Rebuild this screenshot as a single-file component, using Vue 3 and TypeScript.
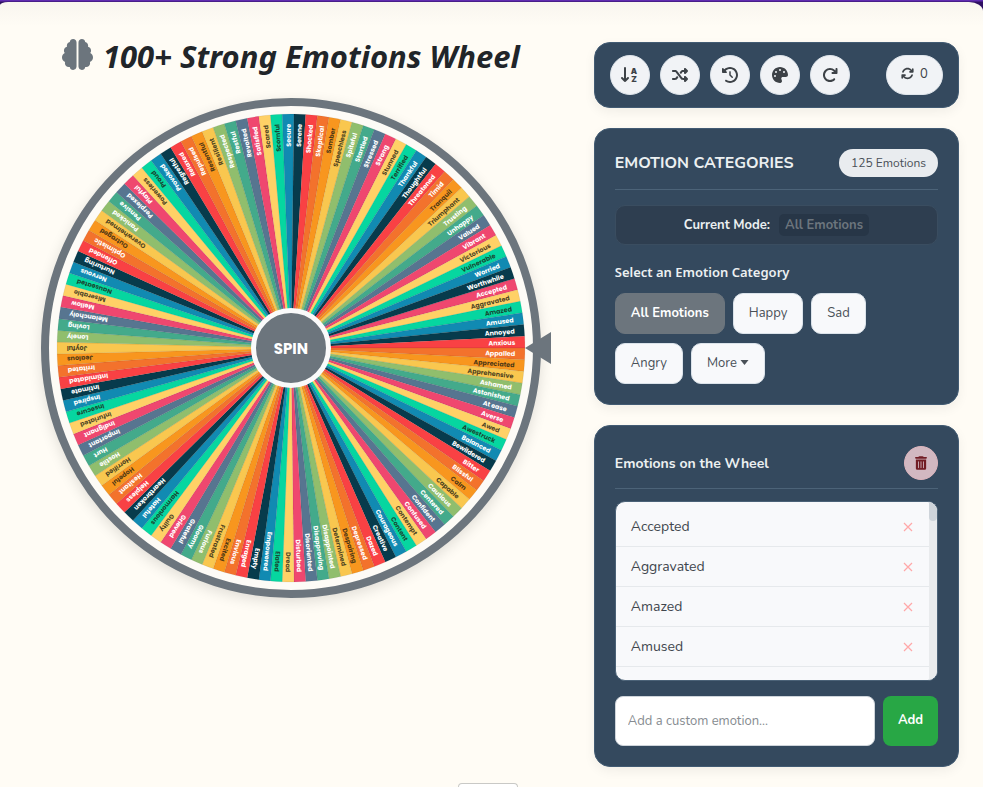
<script setup lang="ts">
import { computed, ref } from 'vue'

interface Slice {
  name: string
  path: string
  fill: string
  ink: string
  turn: string
}

const PALETTE = [
  '#ef476f', '#ffd166', '#06d6a0', '#118ab2', '#073b4c', '#f94144',
  '#f3722c', '#f8961e', '#f9c74f', '#90be6d', '#43aa8b', '#577590',
]
const DARK_INK = new Set(['#ffd166', '#06d6a0', '#f8961e', '#f9c74f'])
const RADIUS = 290

const emotions = ref<string[]>(
  `Accepted,Aggravated,Amazed,Amused,Annoyed,Anxious,Appalled,Appreciated,Apprehensive,Ashamed,Astonished,At ease,
Averse,Awed,Awestruck,Balanced,Bewildered,Bitter,Blissful,Calm,Capable,Cautious,Centered,Confident,
Confused,Contempt,Content,Courageous,Creative,Dazed,Depressed,Despairing,Determined,Disappointed,Disapproving,Disoriented,
Disturbed,Dread,Elated,Empowered,Empty,Enraged,Envious,Excited,Frustrated,Furious,Gloomy,Grateful,
Grieved,Guilty,Harmonious,Hateful,Heartbroken,Helpless,Hesitant,Hopeful,Horrified,Hostile,Hurt,Important,
Indignant,Infuriated,Insecure,Inspired,Intimate,Intimidated,Irritated,Jealous,Joyful,Lonely,Loving,Melancholy,
Mellow,Miserable,Nauseated,Nervous,Nurturing,Offended,Optimistic,Outraged,Overwhelmed,Panicked,Pensive,Perplexed,
Playful,Powerless,Proud,Provoked,Regretful,Relaxed,Repulsed,Resentful,Resilient,Respected,Restful,Revolted,
Satisfied,Scared,Scornful,Secure,Serene,Shocked,Skeptical,Somber,Speechless,Spiteful,Startled,Stressed,
Strong,Stunned,Terrified,Thankful,Thoughtful,Threatened,Timid,Tranquil,Triumphant,Trusting,Unhappy,Valued,
Vibrant,Victorious,Vulnerable,Worried,Worthwhile`.split(',').map((name) => name.trim()),
)

const START_SLICES = 6
const rotation = ref(0)
const spins = ref(0)
const draft = ref('')
const mode = ref('All Emotions')
const categories = ['All Emotions', 'Happy', 'Sad', 'Angry']

function point(deg: number): string {
  const rad = (deg * Math.PI) / 180
  return `${(RADIUS * Math.cos(rad)).toFixed(2)} ${(RADIUS * Math.sin(rad)).toFixed(2)}`
}

const slices = computed<Slice[]>(() => {
  const step = 360 / emotions.value.length
  return emotions.value.map((name, i) => {
    const from = (i - START_SLICES) * step
    const fill = PALETTE[i % PALETTE.length]
    return {
      name,
      fill,
      path: `M0 0L${point(from)}A${RADIUS} ${RADIUS} 0 0 1 ${point(from + step)}Z`,
      ink: DARK_INK.has(fill) ? 'rgba(30, 30, 20, 0.8)' : '#fff',
      turn: `rotate(${(from + step / 2).toFixed(2)})`,
    }
  })
})

// Only the rows inside the scroll window are rendered; padding stands in for the rest.
const ROW = 40
const VIEW = 178
const LEAD = 5
const TEXT_TOP = 14
const scrollTop = ref(0)
const first = computed(() => Math.max(0, Math.floor((scrollTop.value - LEAD) / ROW)))
const last = computed(() =>
  Math.min(emotions.value.length, Math.floor((scrollTop.value + VIEW - LEAD - TEXT_TOP) / ROW) + 1),
)
const rows = computed(() =>
  emotions.value.slice(first.value, last.value).map((name, i) => ({ name, index: first.value + i })),
)
const listPadding = computed(() => ({
  paddingTop: `${LEAD + first.value * ROW}px`,
  paddingBottom: `${(emotions.value.length - last.value) * ROW}px`,
}))
const thumb = computed(() => {
  const content = LEAD + emotions.value.length * ROW
  const size = Math.max(19, (VIEW * VIEW) / content)
  const travel = Math.max(1, content - VIEW)
  return {
    height: `${size}px`,
    marginTop: `${Math.min(1, scrollTop.value / travel) * (VIEW - size)}px`,
  }
})

function onScroll(event: Event): void {
  scrollTop.value = (event.target as HTMLElement).scrollTop
}

const tools = [
  {
    label: 'Shuffle',
    box: '0 0 512 512',
    path: 'M403.8 34.4c12-5 25.7-2.2 34.9 6.9l64 64c6 6 9.4 14.1 9.4 22.6s-3.4 16.6-9.4 22.6l-64 64c-9.2 9.2-22.9 11.9-34.9 6.9s-19.8-16.6-19.8-29.6V160H352c-10.1 0-19.6 4.7-25.6 12.8L284 229.3 244 176l31.2-41.6C293.3 110.2 321.8 96 352 96h32V64c0-12.9 7.8-24.6 19.8-29.6zM164 282.7L204 336l-31.2 41.6C154.7 401.8 126.2 416 96 416H32c-17.7 0-32-14.3-32-32s14.3-32 32-32H96c10.1 0 19.6-4.7 25.6-12.8L164 282.7zm274.6 188c-9.2 9.2-22.9 11.9-34.9 6.9s-19.8-16.6-19.8-29.6V416H352c-30.2 0-58.7-14.2-76.8-38.4L121.6 172.8c-6-8.1-15.5-12.8-25.6-12.8H32c-17.7 0-32-14.3-32-32s14.3-32 32-32H96c30.2 0 58.7 14.2 76.8 38.4L326.4 339.2c6 8.1 15.5 12.8 25.6 12.8h32V320c0-12.9 7.8-24.6 19.8-29.6s25.7-2.2 34.9 6.9l64 64c6 6 9.4 14.1 9.4 22.6s-3.4 16.6-9.4 22.6l-64 64z',
  },
  {
    label: 'History',
    box: '0 0 512 512',
    path: 'M75 75L41 41C25.9 25.9 0 36.6 0 57.9V168c0 13.3 10.7 24 24 24H134.1c21.4 0 32.1-25.9 17-41l-30.8-30.8C155 85.5 203 64 256 64c106 0 192 86 192 192s-86 192-192 192c-40.8 0-78.6-12.7-109.7-34.4c-14.5-10.1-34.4-6.6-44.6 7.9s-6.6 34.4 7.9 44.6C151.2 495 201.7 512 256 512c141.4 0 256-114.6 256-256S397.4 0 256 0C185.3 0 121.3 28.7 75 75zm181 53c-13.3 0-24 10.7-24 24V256c0 6.4 2.5 12.5 7 17l72 72c9.4 9.4 24.6 9.4 33.9 0s9.4-24.6 0-33.9l-65-65V152c0-13.3-10.7-24-24-24z',
  },
  {
    label: 'Colours',
    box: '0 0 512 512',
    path: 'M512 256c0 .9 0 1.8 0 2.7c-.4 36.5-33.6 61.3-70.1 61.3H344c-26.5 0-48 21.5-48 48c0 3.4 .4 6.7 1 9.9c2.1 10.2 6.5 20 10.8 29.9c6.1 13.8 12.1 27.5 12.1 42c0 31.8-21.6 60.7-53.4 62c-3.5 .1-7 .2-10.6 .2C114.6 512 0 397.4 0 256S114.6 0 256 0S512 114.6 512 256zM128 288a32 32 0 1 0 -64 0 32 32 0 1 0 64 0zm0-96a32 32 0 1 0 0-64 32 32 0 1 0 0 64zM288 96a32 32 0 1 0 -64 0 32 32 0 1 0 64 0zm96 96a32 32 0 1 0 0-64 32 32 0 1 0 0 64z',
  },
  {
    label: 'Reset',
    box: '0 0 512 512',
    path: 'M386.3 160H336c-17.7 0-32 14.3-32 32s14.3 32 32 32H464c17.7 0 32-14.3 32-32V64c0-17.7-14.3-32-32-32s-32 14.3-32 32v51.2L414.4 97.6c-87.5-87.5-229.3-87.5-316.8 0s-87.5 229.3 0 316.8s229.3 87.5 316.8 0c12.5-12.5 12.5-32.8 0-45.3s-32.8-12.5-45.3 0c-62.5 62.5-163.8 62.5-226.3 0s-62.5-163.8 0-226.3s163.8-62.5 226.3 0L386.3 160z',
  },
]

function spin(): void {
  spins.value += 1
  rotation.value += 720 + Math.random() * 360
}

function addEmotion(): void {
  const name = draft.value.trim()
  if (name) emotions.value.push(name)
  draft.value = ''
}

function removeEmotion(index: number): void {
  emotions.value.splice(index, 1)
}
</script>

<template>
  <div class="page">
    <main class="sheet">
      <section class="stage">
        <h1 class="title">
          <svg class="brain" viewBox="0 0 512 512" aria-hidden="true">
            <path d="M184 0c30.9 0 56 25.1 56 56V456c0 30.9-25.1 56-56 56c-28.9 0-52.7-21.9-55.7-50.1c-5.2 1.4-10.7 2.1-16.3 2.1c-35.3 0-64-28.7-64-64c0-7.4 1.3-14.6 3.6-21.2C21.4 367.4 0 338.2 0 304c0-31.9 18.7-59.5 45.8-72.3C37.1 220.8 32 207 32 192c0-30.7 21.6-56.3 50.4-62.6C80.8 123.9 80 118 80 112c0-29.9 20.6-55.1 48.3-62.1C131.3 21.9 155.1 0 184 0zM328 0c28.9 0 52.6 21.9 55.7 49.9c27.8 7 48.3 32.1 48.3 62.1c0 6-.8 11.9-2.4 17.4c28.8 6.2 50.4 31.9 50.4 62.6c0 15-5.1 28.8-13.8 39.7C493.3 244.5 512 272.1 512 304c0 34.2-21.4 63.4-51.6 74.8c2.3 6.6 3.6 13.8 3.6 21.2c0 35.3-28.7 64-64 64c-5.6 0-11.1-.7-16.3-2.1c-3 28.2-26.8 50.1-55.7 50.1c-30.9 0-56-25.1-56-56V56c0-30.9 25.1-56 56-56z" />
          </svg>
          <span>100+ Strong Emotions Wheel</span>
        </h1>

        <div class="wheel">
          <svg class="disc" viewBox="-300 -300 600 600" role="img" aria-label="Emotions wheel">
            <g :transform="`rotate(${rotation})`">
              <path v-for="s in slices" :key="s.name" :d="s.path" :fill="s.fill" class="slice" />
              <text
                v-for="s in slices"
                :key="s.name"
                :transform="s.turn"
                :fill="s.ink"
                class="slice-name"
                x="278"
                y="3"
              >{{ s.name }}</text>
            </g>
          </svg>
          <button class="spin" type="button" @click="spin">SPIN</button>
          <svg class="pointer" viewBox="0 0 26 32" aria-hidden="true">
            <path d="M0 16L26 0V32Z" />
          </svg>
        </div>
      </section>

      <aside class="side">
        <section class="card toolbar">
          <button class="round" type="button" aria-label="Sort alphabetically">
            <svg viewBox="0 0 18 18" class="icon sort" aria-hidden="true">
              <path d="M4 2V15M1 12L4 15L7 12" fill="none" stroke="currentColor" stroke-width="2" stroke-linecap="round" stroke-linejoin="round" />
              <text x="13" y="8">A</text>
              <text x="13" y="16">Z</text>
            </svg>
          </button>
          <button v-for="t in tools" :key="t.label" class="round" type="button" :aria-label="t.label">
            <svg class="icon" :viewBox="t.box" aria-hidden="true"><path :d="t.path" /></svg>
          </button>
          <button class="round counter" type="button" aria-label="Spin count">
            <svg class="icon small" viewBox="0 0 512 512" aria-hidden="true">
              <path d="M105.1 202.6c7.7-21.8 20.2-42.3 37.8-59.8c62.5-62.5 163.8-62.5 226.3 0L386.3 160H352c-17.7 0-32 14.3-32 32s14.3 32 32 32H463.5c0 0 0 0 0 0h.4c17.7 0 32-14.3 32-32V80c0-17.7-14.3-32-32-32s-32 14.3-32 32v35.2L414.4 97.6c-87.5-87.5-229.3-87.5-316.8 0C73.2 122 55.6 150.7 44.8 181.4c-5.9 16.7 2.9 34.9 19.5 40.8s34.9-2.9 40.8-19.5zM39 289.3c-5 1.5-9.8 4.2-13.7 8.2c-4 4-6.7 8.8-8.1 14c-.3 1.2-.6 2.5-.8 3.8c-.3 1.7-.4 3.4-.4 5.1V432c0 17.7 14.3 32 32 32s32-14.3 32-32V396.9l17.6 17.5 0 0c87.5 87.4 229.3 87.4 316.7 0c24.4-24.4 42.1-53.1 52.9-83.7c5.9-16.7-2.9-34.9-19.5-40.8s-34.9 2.9-40.8 19.5c-7.7 21.8-20.2 42.3-37.8 59.8c-62.5 62.5-163.8 62.5-226.3 0l-.1-.1L125.6 352H160c17.7 0 32-14.3 32-32s-14.3-32-32-32H48.4c-1.6 0-3.2 .1-4.8 .3s-3.1 .5-4.6 1z" />
            </svg>
            <span>{{ spins }}</span>
          </button>
        </section>

        <section class="card">
          <header class="card-head">
            <h2 class="caps">EMOTION CATEGORIES</h2>
            <span class="count">{{ emotions.length }} Emotions</span>
          </header>
          <p class="mode">
            <span>Current Mode:</span>
            <span class="mode-name">{{ mode }}</span>
          </p>
          <h3 class="pick">Select an Emotion Category</h3>
          <div class="chips">
            <button
              v-for="c in categories"
              :key="c"
              type="button"
              class="chip"
              :class="{ active: c === mode }"
              @click="mode = c"
            >{{ c }}</button>
            <button type="button" class="chip more">
              More
              <svg viewBox="0 0 8 5" class="caret" aria-hidden="true"><path d="M0 0H8L4 5Z" /></svg>
            </button>
          </div>
        </section>

        <section class="card">
          <header class="card-head list-head">
            <h2 class="list-title">Emotions on the Wheel</h2>
            <button class="trash" type="button" aria-label="Remove all emotions" @click="emotions = []">
              <svg viewBox="0 0 448 512" aria-hidden="true">
                <path d="M135.2 17.7L128 32H32C14.3 32 0 46.3 0 64S14.3 96 32 96H416c17.7 0 32-14.3 32-32s-14.3-32-32-32H320l-7.2-14.3C307.4 6.8 296.3 0 284.2 0H163.8c-12.1 0-23.2 6.8-28.6 17.7zM416 128H32V448c0 35.3 28.7 64 64 64H352c35.3 0 64-28.7 64-64V128zM144 208V432c0 8.8-7.2 16-16 16s-16-7.2-16-16V208c0-8.8 7.2-16 16-16s16 7.2 16 16zm96 0V432c0 8.8-7.2 16-16 16s-16-7.2-16-16V208c0-8.8 7.2-16 16-16s16 7.2 16 16zm96 0V432c0 8.8-7.2 16-16 16s-16-7.2-16-16V208c0-8.8 7.2-16 16-16s16 7.2 16 16z" />
              </svg>
            </button>
          </header>
          <div class="list-box">
            <ul class="list" @scroll="onScroll">
              <li class="rows" :style="listPadding">
                <div v-for="r in rows" :key="r.name" class="row">
                  <span>{{ r.name }}</span>
                  <button type="button" class="remove" :aria-label="`Remove ${r.name}`" @click="removeEmotion(r.index)">
                    <svg viewBox="0 0 10 10" aria-hidden="true"><path d="M1 1L9 9M9 1L1 9" /></svg>
                  </button>
                </div>
              </li>
            </ul>
            <div class="track" aria-hidden="true"><div class="thumb" :style="thumb"></div></div>
          </div>
          <form class="add" @submit.prevent="addEmotion">
            <input v-model="draft" type="text" placeholder="Add a custom emotion..." aria-label="Add a custom emotion" />
            <button type="submit">Add</button>
          </form>
        </section>
      </aside>
    </main>
    <button class="drawer" type="button" aria-label="Open drawer"></button>
  </div>
</template>

<style>
body {
  margin: 0;
  background: #fffcf5;
}
</style>

<style scoped>
.page {
  min-height: 100vh;
  box-sizing: border-box;
  padding-top: 2px;
  background: linear-gradient(#5f2bb0 0, #5f2bb0 1px, #2f0f63 2px, #2f0f63 16px, #fffcf5 17px);
  color: #212529;
  font-family: "Nunito", "Lato", "Noto Sans", sans-serif;
}

.page *,
.page *::before {
  box-sizing: border-box;
}

h1,
h2,
h3,
p,
ul {
  margin: 0;
  padding: 0;
}

button,
input {
  font-family: inherit;
}

button {
  cursor: pointer;
}

.sheet {
  display: grid;
  grid-template-columns: minmax(0, 19fr) minmax(0, 13fr);
  gap: 36px;
  align-items: start;
  padding: 40px 24px 20px;
  border-radius: 8px 14px 0 0 / 3px 9px 0 0;
  background: linear-gradient(#f8f5ef, #fffcf5 24px);
}

.stage {
  display: flex;
  flex-direction: column;
  align-items: center;
}

.title {
  display: flex;
  align-items: center;
  gap: 10px;
  height: 28px;
  margin-bottom: 28px;
  font-family: "Segoe UI", "Noto Sans", sans-serif;
  font-size: 31px;
  font-style: italic;
  font-weight: 700;
  line-height: 28px;
  white-space: nowrap;
}

.brain {
  width: 31px;
  height: 31px;
  margin-bottom: 3px;
  fill: #6c757d;
}

.wheel {
  position: relative;
  width: 100%;
  max-width: 500px;
  aspect-ratio: 1;
  border: 8px solid #6c757d;
  border-radius: 50%;
  background: #fdfbf6;
  box-shadow: 0 4px 14px rgba(0, 0, 0, 0.12);
}

.disc {
  display: block;
  width: 100%;
  height: 100%;
}

.slice {
  stroke: rgba(0, 0, 0, 0.16);
  stroke-width: 0.5;
}

.slice-name {
  font-family: "Poppins", "Inter", sans-serif;
  font-size: 8px;
  font-weight: 700;
  text-anchor: end;
}

.spin {
  position: absolute;
  inset: 0;
  width: 80px;
  height: 80px;
  margin: auto;
  padding: 0;
  border: 5px solid #fafafa;
  border-radius: 50%;
  background: #6c757d;
  color: #fff;
  font-family: "Poppins", "Inter", sans-serif;
  font-size: 15px;
  font-weight: 700;
}

.pointer {
  position: absolute;
  top: calc(50% - 16px);
  right: -18px;
  width: 26px;
  height: 32px;
  fill: #6c757d;
}

.side {
  display: flex;
  flex-direction: column;
  gap: 20px;
}

.card {
  padding: 20px;
  border: 1px solid #425b73;
  border-radius: 16px;
  background: #34495e;
  box-shadow: 0 4px 12px rgba(0, 0, 0, 0.06);
  color: #ecf0f1;
}

.toolbar {
  display: flex;
  gap: 10px;
  padding: 12px 15px;
}

.round {
  display: flex;
  align-items: center;
  justify-content: center;
  width: 40px;
  height: 40px;
  padding: 0;
  border: 1px solid #dfe5eb;
  border-radius: 20px;
  background: #f1f3f6;
  color: #3d4247;
}

.icon {
  width: 16px;
  height: 16px;
  fill: currentColor;
}

.sort {
  width: 18px;
  height: 18px;
  overflow: visible;
}

.sort text {
  font-family: "Inter", sans-serif;
  font-size: 8px;
  font-weight: 900;
  text-anchor: middle;
}

.counter {
  gap: 6px;
  width: 57px;
  margin-left: auto;
  padding-bottom: 3px;
  font-size: 13px;
}

.small {
  width: 13px;
  height: 13px;
}

.card-head {
  display: flex;
  align-items: center;
  justify-content: space-between;
  height: 41px;
  padding-bottom: 12px;
  margin-bottom: 15px;
  border-bottom: 1px solid #4c6378;
}

.caps {
  font-size: 16px;
  font-weight: 700;
}

.count {
  padding: 0 12px;
  border-radius: 14px;
  background: #e9ecef;
  color: #495057;
  font-size: 12px;
  line-height: 28px;
}

.mode {
  display: flex;
  align-items: center;
  justify-content: center;
  gap: 9px;
  height: 40px;
  border: 1px solid #3a4d60;
  border-radius: 10px;
  background: #2e3e50;
  font-size: 13px;
  font-weight: 700;
}

.mode-name {
  padding: 0 6px;
  border-radius: 5px;
  background: #273647;
  color: #6c757d;
  line-height: 22px;
}

.pick {
  margin: 17px 0 11px;
  font-family: "Segoe UI", "Noto Sans", sans-serif;
  font-size: 13px;
  font-weight: 600;
  line-height: 20px;
}

.chips {
  display: flex;
  flex-wrap: wrap;
  gap: 9px 8px;
}

.chip {
  height: 41px;
  padding: 0 15px 1px;
  border: 1px solid #dbe3ea;
  border-radius: 10px;
  background: #f8f9fb;
  color: #495057;
  font-size: 13px;
}

.chip.active {
  border-color: #6c757d;
  background: #6c757d;
  color: #fff;
  font-weight: 700;
}

.caret {
  width: 9px;
  height: 5px;
  margin-bottom: 2px;
  fill: currentColor;
}

.list-head {
  height: 43px;
  padding-bottom: 8px;
  margin-bottom: 12px;
}

.list-title {
  font-size: 14px;
  font-weight: 700;
}

.trash {
  display: flex;
  align-items: center;
  justify-content: center;
  width: 34px;
  height: 34px;
  padding: 0;
  border: 1px solid #dcb5bd;
  border-radius: 50%;
  background: #d2b8c1;
}

.trash svg {
  width: 12px;
  height: 14px;
  fill: #721c24;
}

.list-box {
  display: flex;
  height: 180px;
  overflow: hidden;
  border: 1px solid #4b6277;
  border-radius: 10px;
  background: #f8f9fb;
}

.list {
  flex: 1;
  overflow-y: auto;
  list-style: none;
  scrollbar-width: none;
}

.track {
  width: 8px;
  background: #e9ebed;
}

.thumb {
  border-radius: 0 0 4px 4px;
  background: #ced4da;
}

.row {
  display: flex;
  align-items: center;
  justify-content: space-between;
  height: 40px;
  padding: 0 16px 1px 15px;
  border-bottom: 1px solid #e6e9ec;
  color: #40464d;
  font-size: 14px;
}

.remove {
  display: flex;
  padding: 2px 0 0;
  border: 0;
  background: none;
}

.remove svg {
  width: 10px;
  height: 10px;
  fill: none;
  stroke: #ffa8a8;
  stroke-width: 1.2;
}

.add {
  display: flex;
  gap: 8px;
  margin-top: 15px;
}

.add input {
  flex: 1;
  min-width: 0;
  height: 50px;
  padding: 0 12px;
  border: 1px solid #ced4da;
  border-radius: 8px;
  background: #fff;
  color: #495057;
  font-size: 13px;
}

.add input::placeholder {
  color: #868b90;
}

.add button {
  width: 55px;
  padding: 0 0 3px;
  border: 0;
  border-radius: 8px;
  background: #28a745;
  color: #fff;
  font-size: 13px;
  font-weight: 700;
}

.drawer {
  position: fixed;
  bottom: 0;
  left: calc(50% - 34px);
  width: 60px;
  height: 4px;
  padding: 0;
  border: 1px solid #c9c9c6;
  border-bottom: 0;
  border-radius: 4px 4px 0 0;
  background: #fff;
}
</style>
